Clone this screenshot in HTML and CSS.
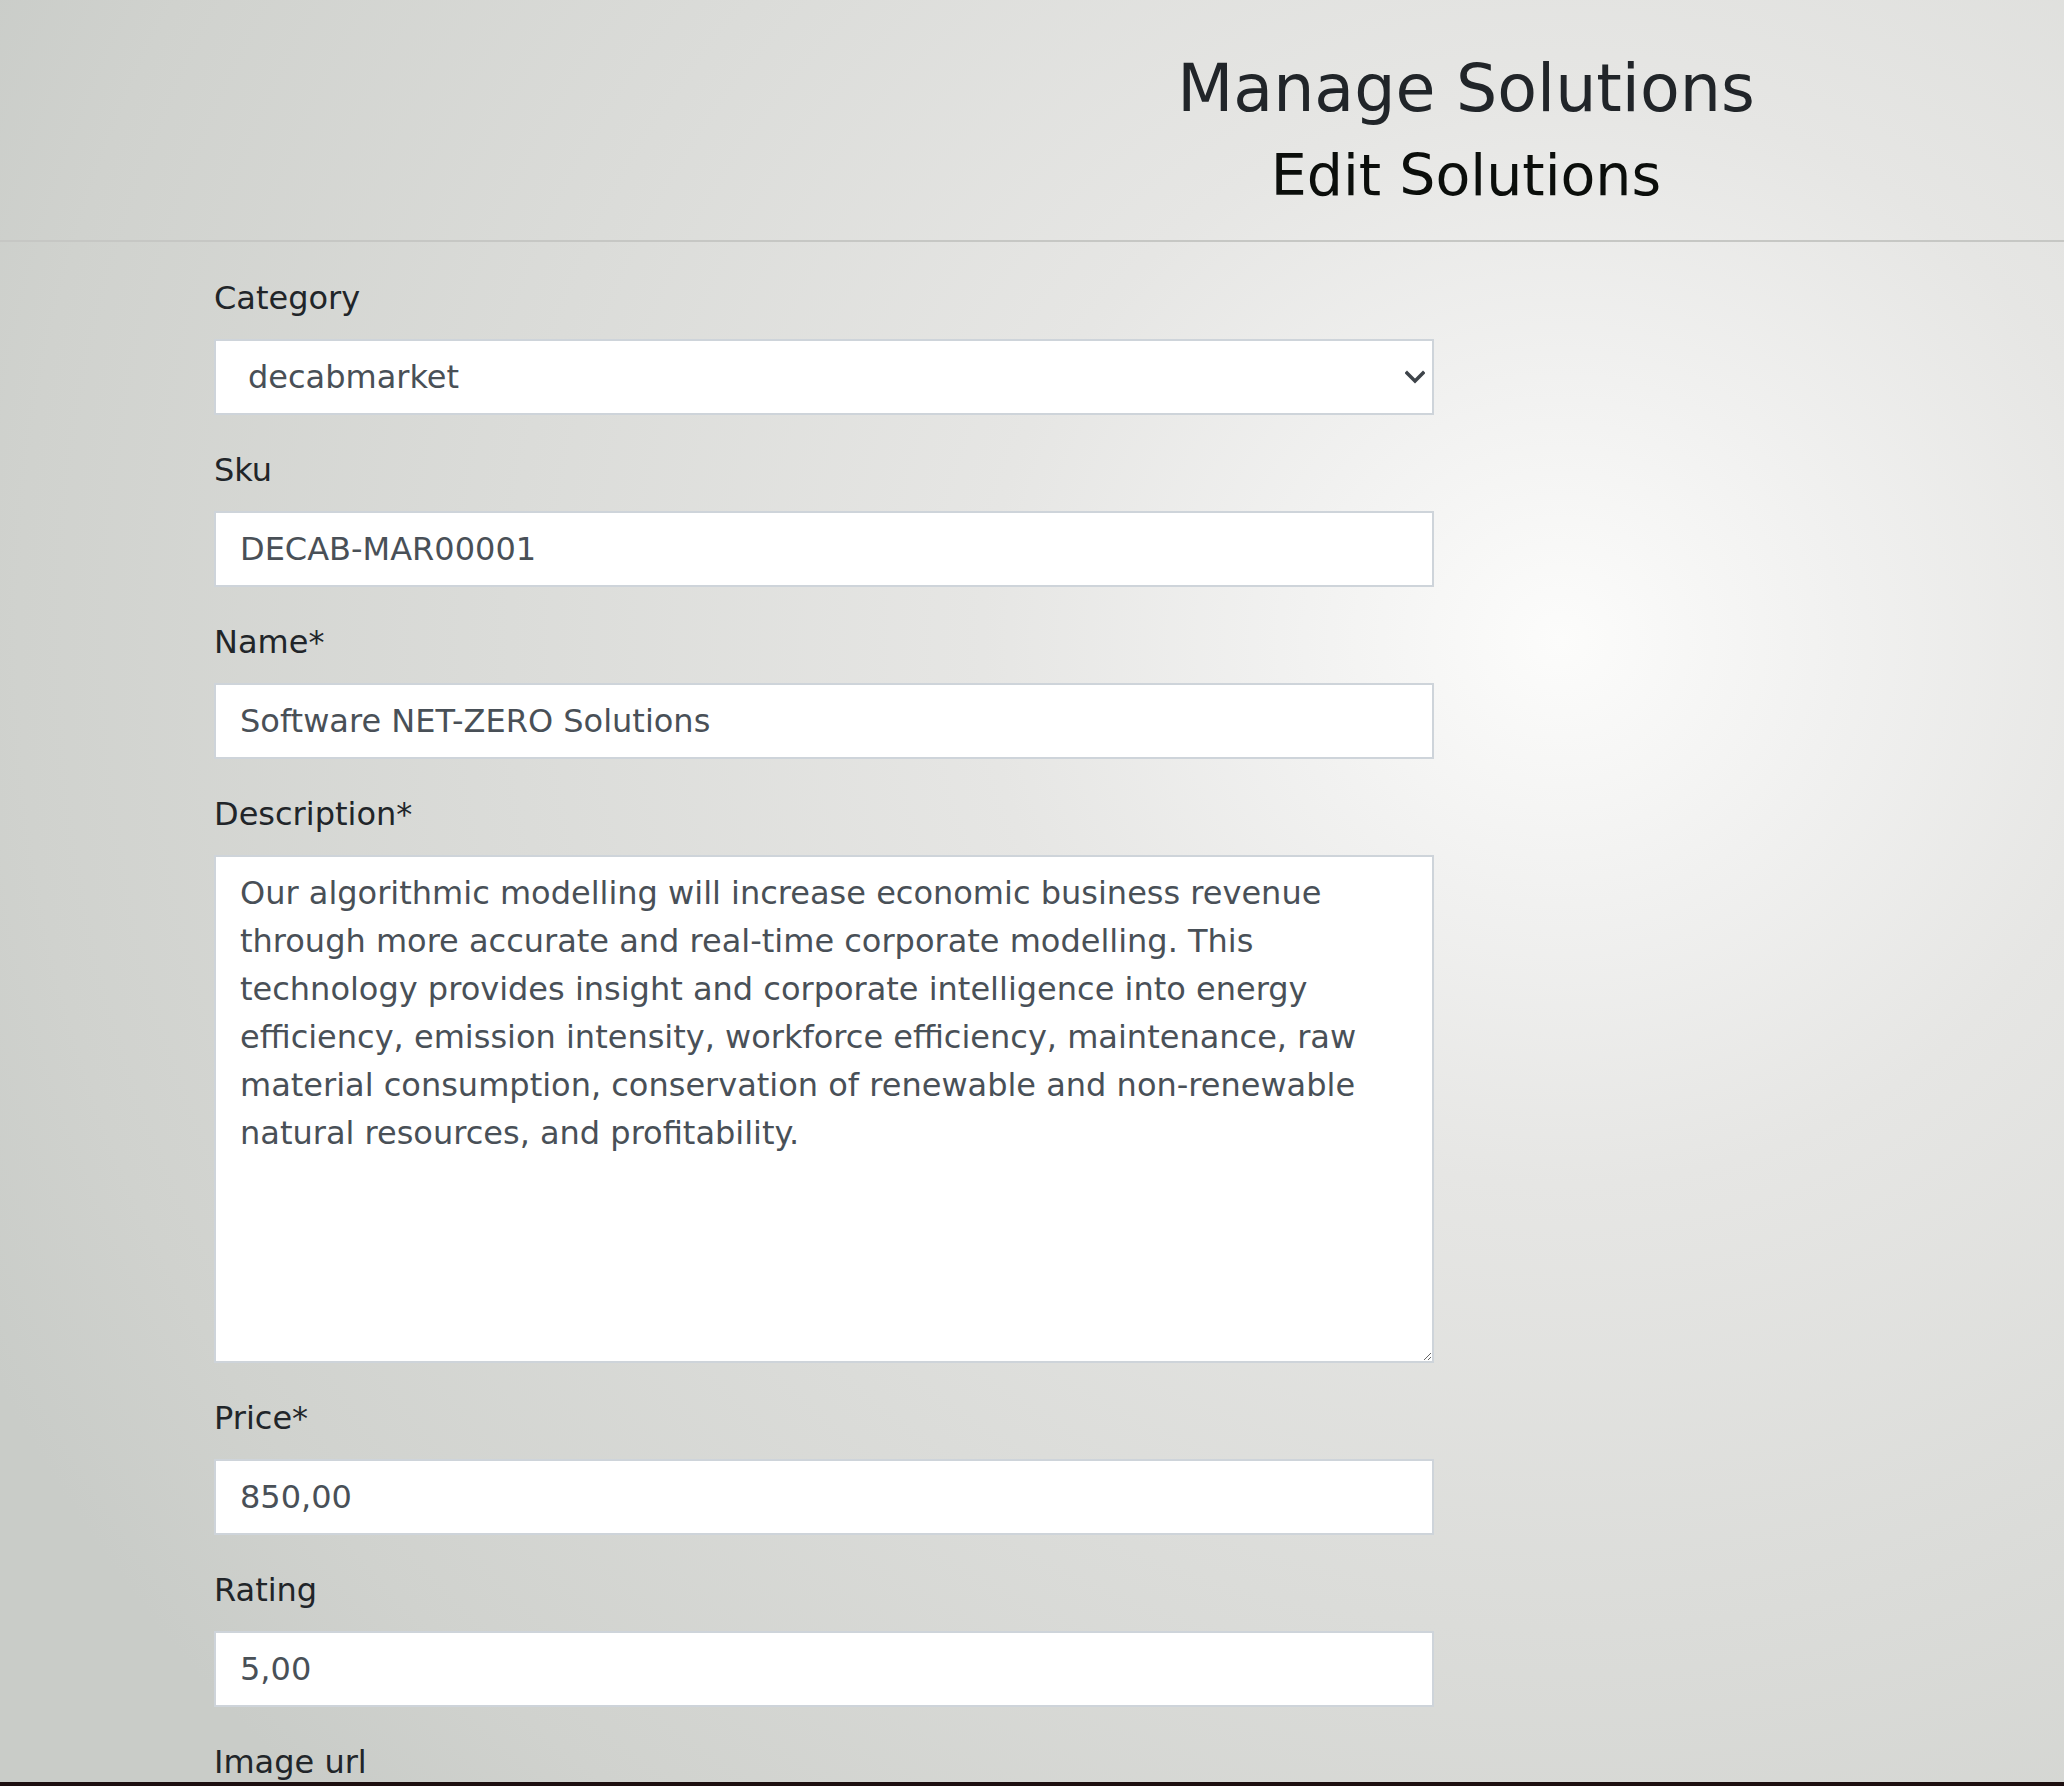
FILE: index.html
```html
<!DOCTYPE html>
<html lang="en">
<head>
<meta charset="utf-8">
<title>Manage Solutions</title>
<link rel="stylesheet" href="styles.css">
</head>
<body>
<header class="page-header">
  <div class="header-spacer"></div>
  <div class="header-titles">
    <h1 class="title">Manage Solutions</h1>
    <h2 class="subtitle">Edit Solutions</h2>
  </div>
</header>
<main class="form-wrap">
  <form class="edit-form">
    <div class="form-group">
      <label class="form-label" for="category">Category</label>
      <div class="select-wrap">
        <select id="category" class="form-control form-select">
          <option>decabmarket</option>
        </select>
        <svg class="chevron" width="20" height="14" viewBox="0 0 20 14"><path d="M2 3 L10 11 L18 3" fill="none" stroke="#3e444a" stroke-width="3.4" stroke-linecap="square"/></svg>
      </div>
    </div>
    <div class="form-group">
      <label class="form-label" for="sku">Sku</label>
      <input id="sku" class="form-control" type="text" value="DECAB-MAR00001">
    </div>
    <div class="form-group">
      <label class="form-label" for="name">Name*</label>
      <input id="name" class="form-control" type="text" value="Software NET-ZERO Solutions">
    </div>
    <div class="form-group">
      <label class="form-label" for="desc">Description*</label>
      <textarea id="desc" class="form-control form-textarea" rows="10">Our algorithmic modelling will increase economic business revenue
through more accurate and real-time corporate modelling. This
technology provides insight and corporate intelligence into energy
efficiency, emission intensity, workforce efficiency, maintenance, raw
material consumption, conservation of renewable and non-renewable
natural resources, and profitability.</textarea>
    </div>
    <div class="form-group">
      <label class="form-label" for="price">Price*</label>
      <input id="price" class="form-control" type="text" value="850,00">
    </div>
    <div class="form-group">
      <label class="form-label" for="rating">Rating</label>
      <input id="rating" class="form-control" type="text" value="5,00">
    </div>
    <div class="form-group">
      <label class="form-label" for="image">Image url</label>
      <input id="image" class="form-control" type="text" value="">
    </div>
  </form>
</main>
<div class="bottom-bar"></div>
</body>
</html>
```

FILE: styles.css
```css
html {
  background: #d3d5d1;
}
body {
  margin: 0;
  min-height: 1786px;
  font-family: "DejaVu Sans", "Liberation Sans", sans-serif;
  color: #212529;
  background: radial-gradient(ellipse 1750px 1650px at 1560px 640px,
    #fcfcfb 0%, #f1f1f0 16%, #e6e6e4 33%, #dbdcd9 60%, #d0d2ce 88%, #c9ccc8 100%);
}
.page-header {
  display: grid;
  grid-template-columns: 868px 1fr;
  padding: 50px 0 31px;
  border-bottom: 2px solid #c6c7c4;
}
.header-titles {
  text-align: center;
}
.title {
  margin: 0;
  font-size: 65px;
  line-height: 77px;
  font-weight: 400;
  color: #212529;
}
.subtitle {
  margin: 15px 0 0;
  font-size: 57px;
  line-height: 67px;
  font-weight: 400;
  color: #0b0e0b;
}
.form-wrap {
  padding: 33px 0 0 214px;
}
.edit-form {
  width: 1220px;
}
.form-group {
  margin-bottom: 32px;
}
.form-label {
  display: block;
  font-size: 32px;
  line-height: 46px;
  margin-bottom: 18px;
  color: #212529;
}
.form-control {
  display: block;
  box-sizing: border-box;
  width: 100%;
  height: 76px;
  margin: 0;
  padding: 12px 24px;
  border: 2px solid #ced4da;
  border-radius: 0;
  background: #fff;
  font-family: "DejaVu Sans", "Liberation Sans", sans-serif;
  font-size: 32px;
  line-height: 48px;
  color: #495057;
  outline: none;
}
.select-wrap {
  position: relative;
}
.form-select {
  -webkit-appearance: none;
  appearance: none;
  padding-left: 32px;
}
.chevron {
  position: absolute;
  right: 9px;
  top: 31px;
  pointer-events: none;
}
.form-textarea {
  height: 508px;
  resize: vertical;
  overflow: auto;
}
.bottom-bar {
  position: fixed;
  left: 0;
  right: 0;
  bottom: 0;
  height: 4px;
  background: #1d0f10;
}
```
